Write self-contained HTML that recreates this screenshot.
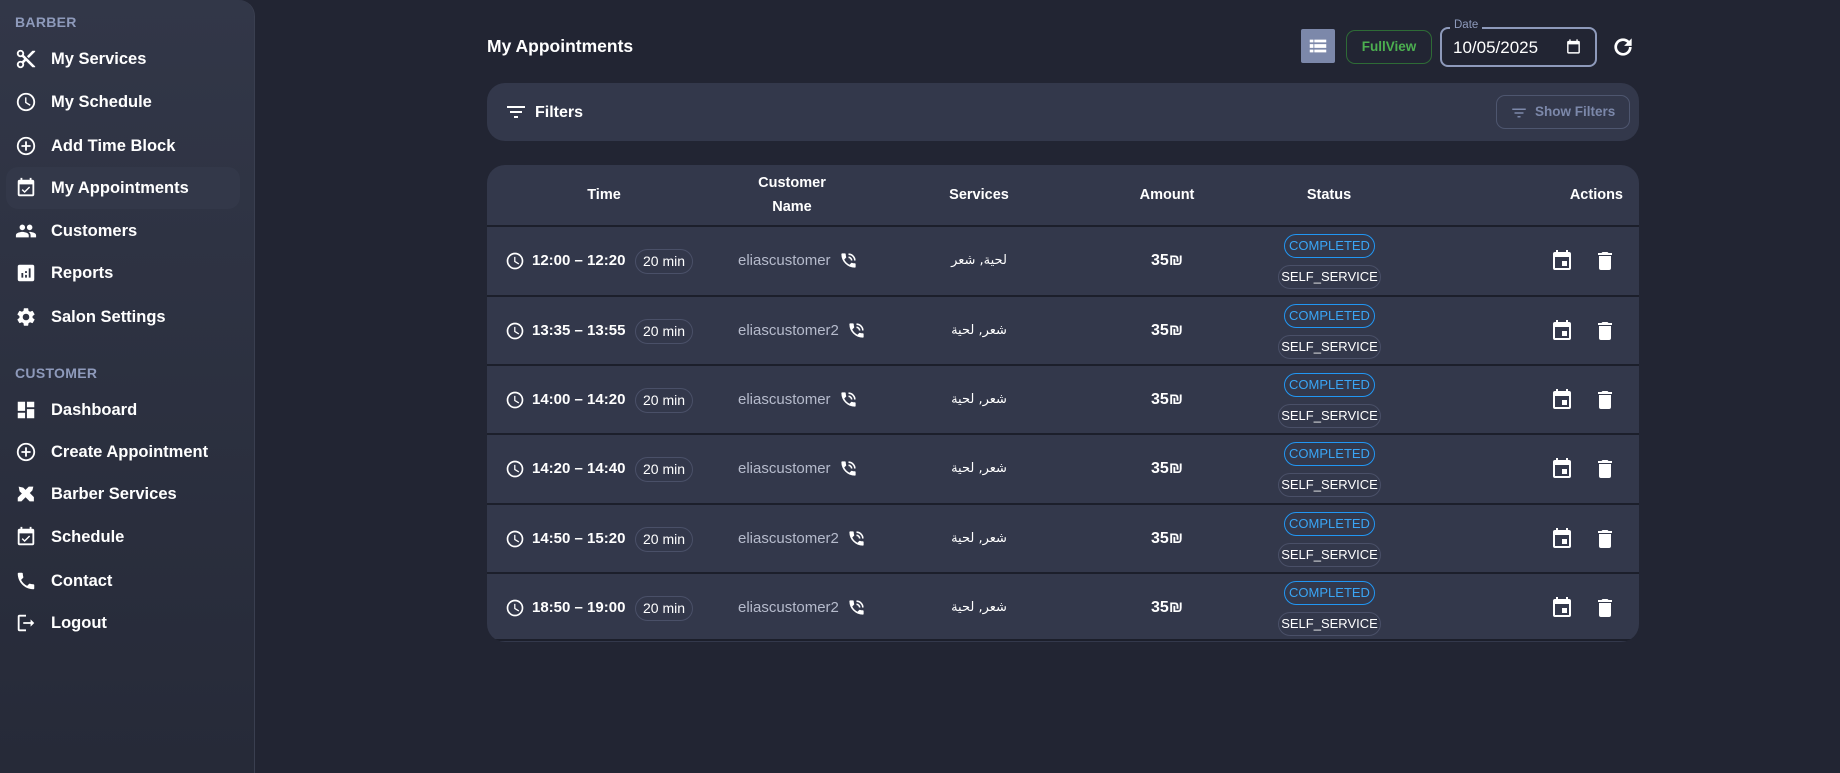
<!DOCTYPE html>
<html><head><meta charset="utf-8"><style>
*{margin:0;padding:0;box-sizing:border-box}
body{width:1840px;height:773px;background:#222533;font-family:"Liberation Sans","Noto Sans CJK SC",sans-serif;color:#fff;position:relative;overflow:hidden}
.side{position:absolute;left:0;top:0;width:255px;height:773px;background:linear-gradient(#323748,#262a38);border-right:1px solid #3a3f50;border-top-right-radius:16px}
.sec{position:absolute;left:15px;font-size:14px;font-weight:bold;color:#8e9abb;letter-spacing:.3px}
.it{position:absolute;left:6px;width:234px;height:42px;border-radius:12px;display:flex;align-items:center;font-size:16.5px;font-weight:bold}
.it svg{position:absolute;left:9px;width:22px;height:22px;fill:#fff}
.it span{position:absolute;left:45px}
.act{background:#333849}
.ab{position:absolute}
svg.w{fill:#fff}
.panel{position:absolute;left:487px;top:83px;width:1152px;height:58px;background:#33384b;border-radius:18px}
.tbl{position:absolute;left:487px;top:165px;width:1152px;height:477px;background:#33384b;border-radius:18px;overflow:hidden}
.th{position:absolute;font-size:14.5px;font-weight:bold;text-align:center;line-height:24px}
.row{position:absolute;left:0;width:1152px;height:69px;border-top:2px solid #1c1f2b}
.row>*{position:absolute}
.time{left:45px;top:24px;font-size:15px;font-weight:bold;line-height:20px}
.chip{left:148px!important;top:22px;height:25px;border:1px solid #4a5068;border-radius:13px;font-size:14px;line-height:23px;padding:0 7px}
.cust{left:251px;top:24px;font-size:15px;color:#b6bbcc;line-height:20px}
.serv{left:412px;width:160px;text-align:center;top:24px;line-height:20px;font-family:"DejaVu Sans",sans-serif;font-size:13px}
.amt{left:640px;width:80px;text-align:center;top:25px;font-size:16px;font-weight:bold}
.c1{left:797px;top:7px;width:91px;height:24px;border:1px solid #2196f3;border-radius:12px;color:#3aa5f5;font-size:13px;text-align:center;line-height:22px}
.c2{left:791px;top:38px;width:103px;height:24px;border:1px solid #4a5068;border-radius:12px;font-size:13px;text-align:center;line-height:22px}
.row svg.ck{left:18px;top:24px;width:20px;height:20px}
</style></head><body>
<div class="side">
<div class="sec" style="top:14px">BARBER</div>
<div class="it" style="top:38px"><svg viewBox="0 0 24 24"><path d="M9.64 7.64c.23-.5.36-1.050.36-1.64 0-2.21-1.79-4-4-4S2 3.79 2 6s1.79 4 4 4c.59 0 1.14-.13 1.64-.36L10 12l-2.36 2.36C7.14 14.13 6.59 14 6 14c-2.21 0-4 1.79-4 4s1.79 4 4 4 4-1.79 4-4c0-.59-.13-1.14-.36-1.64L12 14l7 7h3v-1L9.64 7.64zM6 8c-1.1 0-2-.89-2-2s.9-2 2-2 2 .89 2 2-.9 2-2 2zm0 12c-1.1 0-2-.89-2-2s.9-2 2-2 2 .89 2 2-.9 2-2 2zM19 3l-6 6 2 2 7-7V3z"/></svg><span>My Services</span></div>
<div class="it" style="top:81px"><svg viewBox="0 0 24 24"><path d="M12 2a10 10 0 100 20 10 10 0 000-20zm0 18a8 8 0 110-16 8 8 0 010 16zm.5-13H11v6l5.2 3.2.8-1.3-4.5-2.7V7z"/></svg><span>My Schedule</span></div>
<div class="it" style="top:125px"><svg viewBox="0 0 24 24"><path d="M13 7h-2v4H7v2h4v4h2v-4h4v-2h-4V7zm-1-5a10 10 0 100 20 10 10 0 000-20zm0 18a8 8 0 110-16 8 8 0 010 16z"/></svg><span>Add Time Block</span></div>
<div class="it act" style="top:167px"><svg viewBox="0 0 24 24"><path d="M16.5 11.5l-1.1-1.1-4.9 4.9-2.1-2.1-1.1 1.1 3.2 3.2zM19 3h-1V1h-2v2H8V1H6v2H5a2 2 0 00-2 2v14a2 2 0 002 2h14a2 2 0 002-2V5a2 2 0 00-2-2zm0 16H5V8h14v11z"/></svg><span>My Appointments</span></div>
<div class="it" style="top:210px"><svg viewBox="0 0 24 24"><path d="M16 11c1.66 0 2.99-1.34 2.99-3S17.66 5 16 5s-3 1.34-3 3 1.34 3 3 3zm-8 0c1.66 0 2.99-1.34 2.99-3S9.66 5 8 5 5 6.34 5 8s1.34 3 3 3zm0 2c-2.33 0-7 1.17-7 3.5V19h14v-2.5c0-2.33-4.67-3.5-7-3.5zm8 0c-.29 0-.62.02-.97.05 1.16.84 1.97 1.970 1.97 3.45V19h6v-2.5c0-2.33-4.67-3.5-7-3.5z"/></svg><span>Customers</span></div>
<div class="it" style="top:252px"><svg viewBox="0 0 24 24"><path d="M19 3H5a2 2 0 00-2 2v14a2 2 0 002 2h14a2 2 0 002-2V5a2 2 0 00-2-2zM9 17H7v-5h2v5zm4 0h-2v-3h2v3zm0-5h-2v-2h2v2zm4 5h-2V7h2v10z"/></svg><span>Reports</span></div>
<div class="it" style="top:296px"><svg viewBox="0 0 24 24"><path d="M19.14 12.94c.04-.3.06-.61.06-.94s-.02-.64-.07-.94l2.03-1.58a.49.49 0 00.12-.61l-1.92-3.32a.49.49 0 00-.59-.22l-2.39.96c-.5-.38-1.030-.7-1.62-.94l-.36-2.54a.48.48 0 00-.48-.41h-3.84a.47.47 0 00-.47.41l-.36 2.54c-.59.24-1.13.57-1.62.94l-2.39-.96a.48.48 0 00-.59.22L2.74 8.87a.47.47 0 00.12.61l2.03 1.58c-.05.3-.09.63-.09.94s.02.64.07.94l-2.03 1.58a.49.49 0 00-.12.61l1.92 3.32c.12.22.37.29.59.22l2.39-.96c.5.38 1.03.7 1.62.94l.36 2.54c.05.24.24.41.48.41h3.84c.24 0 .44-.17.47-.41l.36-2.54c.59-.24 1.13-.56 1.62-.94l2.39.96c.22.08.47 0 .59-.22l1.92-3.32a.47.47 0 00-.12-.61l-2.01-1.58zM12 15.6a3.6 3.6 0 110-7.2 3.6 3.6 0 010 7.2z"/></svg><span>Salon Settings</span></div>
<div class="sec" style="top:365px">CUSTOMER</div>
<div class="it" style="top:389px"><svg viewBox="0 0 24 24"><path d="M3 13h8V3H3v10zm0 8h8v-6H3v6zm10 0h8V11h-8v10zm0-18v6h8V3h-8z"/></svg><span>Dashboard</span></div>
<div class="it" style="top:431px"><svg viewBox="0 0 24 24"><path d="M13 7h-2v4H7v2h4v4h2v-4h4v-2h-4V7zm-1-5a10 10 0 100 20 10 10 0 000-20zm0 18a8 8 0 110-16 8 8 0 010 16z"/></svg><span>Create Appointment</span></div>
<div class="it" style="top:473px"><svg viewBox="0 0 24 24"><path d="M13.8 11.4l1.4-1.4 5.4 5.4V20h-4.6l-5.4-5.4 1.4-1.4zM4 4l5 1 4 4-4 4-4-4-1-5zm16 0l-1 4-12 12H3v-4L15 4l5 0z"/></svg><span>Barber Services</span></div>
<div class="it" style="top:516px"><svg viewBox="0 0 24 24"><path d="M16.5 11.5l-1.1-1.1-4.9 4.9-2.1-2.1-1.1 1.1 3.2 3.2zM19 3h-1V1h-2v2H8V1H6v2H5a2 2 0 00-2 2v14a2 2 0 002 2h14a2 2 0 002-2V5a2 2 0 00-2-2zm0 16H5V8h14v11z"/></svg><span>Schedule</span></div>
<div class="it" style="top:560px"><svg viewBox="0 0 24 24"><path d="M6.62 10.79c1.44 2.83 3.76 5.14 6.59 6.59l2.2-2.2c.27-.27.67-.36 1.02-.24 1.12.37 2.33.57 3.57.57.55 0 1 .45 1 1V20c0 .55-.45 1-1 1C10.61 21 3 13.39 3 4c0-.55.45-1 1-1h3.5c.55 0 1 .45 1 1 0 1.25.2 2.45.57 3.57.11.35.03.74-.25 1.02l-2.2 2.2z"/></svg><span>Contact</span></div>
<div class="it" style="top:602px"><svg viewBox="0 0 24 24"><path d="M5 5h7V3H5a2 2 0 00-2 2v14a2 2 0 002 2h7v-2H5V5zm16 7l-4-4v3H9v2h8v3l4-4z"/></svg><span>Logout</span></div>
</div>

<div class="ab" style="left:487px;top:36px;font-size:17.5px;font-weight:bold">My Appointments</div>
<div class="ab" style="left:1301px;top:29px;width:34px;height:34px;background:#7c88aa;border-radius:2px"><svg viewBox="0 0 24 24" style="position:absolute;left:6px;top:6px;width:22px;height:22px" class="w"><path d="M3 5h4v3H3zm5 0h13v3H8zM3 10h4v4H3zm5 0h13v4H8zM3 16h4v3H3zm5 0h13v3H8z"/></svg></div>
<div class="ab" style="left:1346px;top:30px;width:86px;height:34px;border:1px solid #2e6b36;border-radius:9px;color:#4caf50;font-size:13.5px;font-weight:bold;text-align:center;line-height:32px">FullView</div>
<div class="ab" style="left:1440px;top:27px;width:157px;height:40px;border:2px solid #8e9abb;border-radius:8px"></div>
<div class="ab" style="left:1450px;top:19px;padding:0 4px;background:#222533;font-size:11.5px;color:#8e9abb">Date</div>
<div class="ab" style="left:1453px;top:38px;font-size:17px;color:#fff">10/05/2025</div>
<svg class="ab w" viewBox="0 0 24 24" style="left:1565px;top:38px;width:17px;height:17px"><path d="M19 4h-1V2h-2v2H8V2H6v2H5a2 2 0 00-2 2v14a2 2 0 002 2h14a2 2 0 002-2V6a2 2 0 00-2-2zm0 16H5V9h14v11z"/></svg>
<svg class="ab w" viewBox="0 0 24 24" style="left:1610px;top:34px;width:26px;height:26px"><path d="M17.65 6.35A7.96 7.96 0 0012 4a8 8 0 108 8h-2.5a5.5 5.5 0 11-1.61-3.89L13 11h7V4l-2.35 2.35z"/></svg>

<div class="panel">
<svg class="ab w" viewBox="0 0 24 24" style="left:17px;top:17px;width:24px;height:24px"><path d="M10 18h4v-2h-4v2zM3 6v2h18V6H3zm3 7h12v-2H6v2z"/></svg>
<div class="ab" style="left:48px;top:21px;font-size:16px;font-weight:bold">Filters</div>
<div class="ab" style="left:1009px;top:12px;width:134px;height:34px;border:1px solid #4e566f;border-radius:9px;color:#7c88aa;font-size:13.5px;font-weight:bold;line-height:32px;padding-left:38px">Show Filters
<svg viewBox="0 0 24 24" style="position:absolute;left:13px;top:8px;width:18px;height:18px;fill:#7c88aa"><path d="M10 18h4v-2h-4v2zM3 6v2h18V6H3zm3 7h12v-2H6v2z"/></svg></div>
</div>

<div class="tbl">
<div class="th" style="left:57px;width:120px;top:18px">Time</div>
<div class="th" style="left:245px;width:120px;top:6px">Customer<br>Name</div>
<div class="th" style="left:432px;width:120px;top:18px">Services</div>
<div class="th" style="left:620px;width:120px;top:18px">Amount</div>
<div class="th" style="left:782px;width:120px;top:18px">Status</div>
<div class="th" style="left:1050px;width:86px;top:18px;text-align:right">Actions</div>

<div class="row" style="top:60px">
<svg viewBox="0 0 24 24" class="w ck"><path d="M12 2a10 10 0 100 20 10 10 0 000-20zm0 18a8 8 0 110-16 8 8 0 010 16zm.5-13H11v6l5.2 3.2.8-1.3-4.5-2.7V7z"/></svg>
<div class="time">12:00 – 12:20</div><div class="chip">20 min</div>
<div class="cust">eliascustomer</div>
<svg viewBox="0 0 24 24" class="w" style="left:352px;top:24px;width:19px;height:19px"><path d="M20 15.5c-1.25 0-2.45-.2-3.57-.57a1 1 0 00-1.02.24l-2.2 2.2a15.07 15.07 0 01-6.59-6.59l2.2-2.21a.96.96 0 00.25-1A11.36 11.36 0 018.5 4a1 1 0 00-1-1H4a1 1 0 00-1 1 17 17 0 0017 17 1 1 0 001-1v-3.5a1 1 0 00-1-1zM19 12h2a9 9 0 00-9-9v2a7 7 0 017 7zm-4 0h2a5 5 0 00-5-5v2a3 3 0 013 3z"/></svg>
<div class="serv">لحية, شعر</div><div class="amt">35₪</div>
<div class="c1">COMPLETED</div><div class="c2">SELF_SERVICE</div>
<svg viewBox="0 0 24 24" class="w" style="left:1063px;top:22px;width:24px;height:24px"><path d="M17 12h-5v5h5v-5zM16 1v2H8V1H6v2H5a2 2 0 00-2 2v14a2 2 0 002 2h14a2 2 0 002-2V5a2 2 0 00-2-2h-1V1h-2zm3 18H5V8h14v11z"/></svg>
<svg viewBox="0 0 24 24" class="w" style="left:1106px;top:22px;width:24px;height:24px"><path d="M6 19a2 2 0 002 2h8a2 2 0 002-2V7H6v12zM19 4h-3.5l-1-1h-5l-1 1H5v2h14V4z"/></svg>
</div>

<div class="row" style="top:130px">
<svg viewBox="0 0 24 24" class="w ck"><path d="M12 2a10 10 0 100 20 10 10 0 000-20zm0 18a8 8 0 110-16 8 8 0 010 16zm.5-13H11v6l5.2 3.2.8-1.3-4.5-2.7V7z"/></svg>
<div class="time">13:35 – 13:55</div><div class="chip">20 min</div>
<div class="cust">eliascustomer2</div>
<svg viewBox="0 0 24 24" class="w" style="left:360px;top:24px;width:19px;height:19px"><path d="M20 15.5c-1.25 0-2.45-.2-3.57-.57a1 1 0 00-1.02.24l-2.2 2.2a15.07 15.07 0 01-6.59-6.59l2.2-2.21a.96.96 0 00.25-1A11.36 11.36 0 018.5 4a1 1 0 00-1-1H4a1 1 0 00-1 1 17 17 0 0017 17 1 1 0 001-1v-3.5a1 1 0 00-1-1zM19 12h2a9 9 0 00-9-9v2a7 7 0 017 7zm-4 0h2a5 5 0 00-5-5v2a3 3 0 013 3z"/></svg>
<div class="serv">شعر, لحية</div><div class="amt">35₪</div>
<div class="c1">COMPLETED</div><div class="c2">SELF_SERVICE</div>
<svg viewBox="0 0 24 24" class="w" style="left:1063px;top:22px;width:24px;height:24px"><path d="M17 12h-5v5h5v-5zM16 1v2H8V1H6v2H5a2 2 0 00-2 2v14a2 2 0 002 2h14a2 2 0 002-2V5a2 2 0 00-2-2h-1V1h-2zm3 18H5V8h14v11z"/></svg>
<svg viewBox="0 0 24 24" class="w" style="left:1106px;top:22px;width:24px;height:24px"><path d="M6 19a2 2 0 002 2h8a2 2 0 002-2V7H6v12zM19 4h-3.5l-1-1h-5l-1 1H5v2h14V4z"/></svg>
</div>

<div class="row" style="top:199px">
<svg viewBox="0 0 24 24" class="w ck"><path d="M12 2a10 10 0 100 20 10 10 0 000-20zm0 18a8 8 0 110-16 8 8 0 010 16zm.5-13H11v6l5.2 3.2.8-1.3-4.5-2.7V7z"/></svg>
<div class="time">14:00 – 14:20</div><div class="chip">20 min</div>
<div class="cust">eliascustomer</div>
<svg viewBox="0 0 24 24" class="w" style="left:352px;top:24px;width:19px;height:19px"><path d="M20 15.5c-1.25 0-2.45-.2-3.57-.57a1 1 0 00-1.02.24l-2.2 2.2a15.07 15.07 0 01-6.59-6.59l2.2-2.21a.96.96 0 00.25-1A11.36 11.36 0 018.5 4a1 1 0 00-1-1H4a1 1 0 00-1 1 17 17 0 0017 17 1 1 0 001-1v-3.5a1 1 0 00-1-1zM19 12h2a9 9 0 00-9-9v2a7 7 0 017 7zm-4 0h2a5 5 0 00-5-5v2a3 3 0 013 3z"/></svg>
<div class="serv">شعر, لحية</div><div class="amt">35₪</div>
<div class="c1">COMPLETED</div><div class="c2">SELF_SERVICE</div>
<svg viewBox="0 0 24 24" class="w" style="left:1063px;top:22px;width:24px;height:24px"><path d="M17 12h-5v5h5v-5zM16 1v2H8V1H6v2H5a2 2 0 00-2 2v14a2 2 0 002 2h14a2 2 0 002-2V5a2 2 0 00-2-2h-1V1h-2zm3 18H5V8h14v11z"/></svg>
<svg viewBox="0 0 24 24" class="w" style="left:1106px;top:22px;width:24px;height:24px"><path d="M6 19a2 2 0 002 2h8a2 2 0 002-2V7H6v12zM19 4h-3.5l-1-1h-5l-1 1H5v2h14V4z"/></svg>
</div>

<div class="row" style="top:268px">
<svg viewBox="0 0 24 24" class="w ck"><path d="M12 2a10 10 0 100 20 10 10 0 000-20zm0 18a8 8 0 110-16 8 8 0 010 16zm.5-13H11v6l5.2 3.2.8-1.3-4.5-2.7V7z"/></svg>
<div class="time">14:20 – 14:40</div><div class="chip">20 min</div>
<div class="cust">eliascustomer</div>
<svg viewBox="0 0 24 24" class="w" style="left:352px;top:24px;width:19px;height:19px"><path d="M20 15.5c-1.25 0-2.45-.2-3.57-.57a1 1 0 00-1.02.24l-2.2 2.2a15.07 15.07 0 01-6.59-6.59l2.2-2.21a.96.96 0 00.25-1A11.36 11.36 0 018.5 4a1 1 0 00-1-1H4a1 1 0 00-1 1 17 17 0 0017 17 1 1 0 001-1v-3.5a1 1 0 00-1-1zM19 12h2a9 9 0 00-9-9v2a7 7 0 017 7zm-4 0h2a5 5 0 00-5-5v2a3 3 0 013 3z"/></svg>
<div class="serv">شعر, لحية</div><div class="amt">35₪</div>
<div class="c1">COMPLETED</div><div class="c2">SELF_SERVICE</div>
<svg viewBox="0 0 24 24" class="w" style="left:1063px;top:22px;width:24px;height:24px"><path d="M17 12h-5v5h5v-5zM16 1v2H8V1H6v2H5a2 2 0 00-2 2v14a2 2 0 002 2h14a2 2 0 002-2V5a2 2 0 00-2-2h-1V1h-2zm3 18H5V8h14v11z"/></svg>
<svg viewBox="0 0 24 24" class="w" style="left:1106px;top:22px;width:24px;height:24px"><path d="M6 19a2 2 0 002 2h8a2 2 0 002-2V7H6v12zM19 4h-3.5l-1-1h-5l-1 1H5v2h14V4z"/></svg>
</div>

<div class="row" style="top:338px">
<svg viewBox="0 0 24 24" class="w ck"><path d="M12 2a10 10 0 100 20 10 10 0 000-20zm0 18a8 8 0 110-16 8 8 0 010 16zm.5-13H11v6l5.2 3.2.8-1.3-4.5-2.7V7z"/></svg>
<div class="time">14:50 – 15:20</div><div class="chip">20 min</div>
<div class="cust">eliascustomer2</div>
<svg viewBox="0 0 24 24" class="w" style="left:360px;top:24px;width:19px;height:19px"><path d="M20 15.5c-1.25 0-2.45-.2-3.57-.57a1 1 0 00-1.02.24l-2.2 2.2a15.07 15.07 0 01-6.59-6.59l2.2-2.21a.96.96 0 00.25-1A11.36 11.36 0 018.5 4a1 1 0 00-1-1H4a1 1 0 00-1 1 17 17 0 0017 17 1 1 0 001-1v-3.5a1 1 0 00-1-1zM19 12h2a9 9 0 00-9-9v2a7 7 0 017 7zm-4 0h2a5 5 0 00-5-5v2a3 3 0 013 3z"/></svg>
<div class="serv">شعر, لحية</div><div class="amt">35₪</div>
<div class="c1">COMPLETED</div><div class="c2">SELF_SERVICE</div>
<svg viewBox="0 0 24 24" class="w" style="left:1063px;top:22px;width:24px;height:24px"><path d="M17 12h-5v5h5v-5zM16 1v2H8V1H6v2H5a2 2 0 00-2 2v14a2 2 0 002 2h14a2 2 0 002-2V5a2 2 0 00-2-2h-1V1h-2zm3 18H5V8h14v11z"/></svg>
<svg viewBox="0 0 24 24" class="w" style="left:1106px;top:22px;width:24px;height:24px"><path d="M6 19a2 2 0 002 2h8a2 2 0 002-2V7H6v12zM19 4h-3.5l-1-1h-5l-1 1H5v2h14V4z"/></svg>
</div>

<div class="row" style="top:407px;border-bottom:2px solid #1c1f2b">
<svg viewBox="0 0 24 24" class="w ck"><path d="M12 2a10 10 0 100 20 10 10 0 000-20zm0 18a8 8 0 110-16 8 8 0 010 16zm.5-13H11v6l5.2 3.2.8-1.3-4.5-2.7V7z"/></svg>
<div class="time">18:50 – 19:00</div><div class="chip">20 min</div>
<div class="cust">eliascustomer2</div>
<svg viewBox="0 0 24 24" class="w" style="left:360px;top:24px;width:19px;height:19px"><path d="M20 15.5c-1.25 0-2.45-.2-3.57-.57a1 1 0 00-1.02.24l-2.2 2.2a15.07 15.07 0 01-6.59-6.59l2.2-2.21a.96.96 0 00.25-1A11.36 11.36 0 018.5 4a1 1 0 00-1-1H4a1 1 0 00-1 1 17 17 0 0017 17 1 1 0 001-1v-3.5a1 1 0 00-1-1zM19 12h2a9 9 0 00-9-9v2a7 7 0 017 7zm-4 0h2a5 5 0 00-5-5v2a3 3 0 013 3z"/></svg>
<div class="serv">شعر, لحية</div><div class="amt">35₪</div>
<div class="c1">COMPLETED</div><div class="c2">SELF_SERVICE</div>
<svg viewBox="0 0 24 24" class="w" style="left:1063px;top:22px;width:24px;height:24px"><path d="M17 12h-5v5h5v-5zM16 1v2H8V1H6v2H5a2 2 0 00-2 2v14a2 2 0 002 2h14a2 2 0 002-2V5a2 2 0 00-2-2h-1V1h-2zm3 18H5V8h14v11z"/></svg>
<svg viewBox="0 0 24 24" class="w" style="left:1106px;top:22px;width:24px;height:24px"><path d="M6 19a2 2 0 002 2h8a2 2 0 002-2V7H6v12zM19 4h-3.5l-1-1h-5l-1 1H5v2h14V4z"/></svg>
</div>
</div>
</body></html>
